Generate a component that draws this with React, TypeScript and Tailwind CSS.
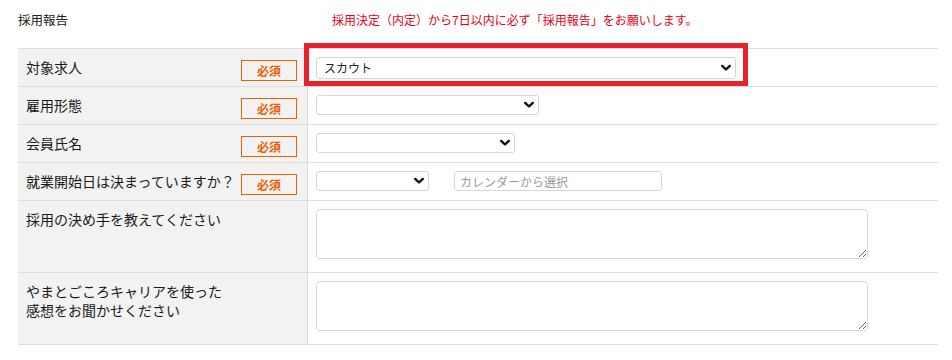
import { ReactNode } from "react";

const font = { fontFamily: '"Noto Sans CJK JP", "Noto Sans", sans-serif' };

const Chevron = () => (
    <svg width="10" height="7" viewBox="0 0 10 7" className="absolute right-[4px] top-1/2 -translate-y-1/2 pointer-events-none">
        <polyline points="1.2,1.3 5,5 8.8,1.3" fill="none" stroke="#111" strokeWidth="2.4" strokeLinecap="round" strokeLinejoin="round" />
    </svg>
);

interface SelectProps {
    width: string;
    height?: string;
    value?: string;
}

const FakeSelect = ({ width, height = "h-[20px]", value }: SelectProps) => (
    <div className={`relative ${width} ${height} border border-[#d6d6d6] rounded-[3px] bg-white`}>
        <span className="absolute left-[7px] top-1/2 -translate-y-1/2 text-[12px] leading-none text-[#222]">{value}</span>
        <Chevron />
    </div>
);

const Badge = () => (
    <span className="mt-[2px] w-[56px] h-[21px] border border-[#eb6100] text-[#eb6100] text-[12px] font-bold leading-[19px] text-center shrink-0">
        必須
    </span>
);

interface RowProps {
    label: ReactNode;
    required?: boolean;
    height: string;
    children: ReactNode;
}

const Row = ({ label, required, height, children }: RowProps) => (
    <div className={`flex border-b border-[#dddddd] ${height}`}>
        <div className="w-[290px] shrink-0 bg-[#f2f2f2] border-r border-[#dddddd] flex justify-between items-start pl-2 pr-[10px] pt-[9px]">
            <span className="text-[14px] leading-[19px] text-[#1a1a1a]">{label}</span>
            {required && <Badge />}
        </div>
        <div className="relative flex-1 pl-2 pt-2 bg-white">{children}</div>
    </div>
);

export default function App() {
    return (
        <div className="w-[952px] h-[360px] bg-white pl-[18px] pr-[14px]" style={font}>
            <div className="flex h-[48px] pt-[11px]">
                <div className="w-[314px] text-[12.5px] leading-[18px] text-[#222]">採用報告</div>
                <div className="text-[12px] leading-[18px] text-[#e60012]">
                    採用決定（内定）から7日以内に必ず「採用報告」をお願いします。
                </div>
            </div>
            <div className="border-t border-[#dddddd]">
                <Row label="対象求人" required height="h-[38px]">
                    <FakeSelect width="w-[420px]" height="h-[22px]" value="スカウト" />
                    <div className="absolute left-[-4px] top-[-6px] w-[444px] h-[43px] border-[5px] border-[#e8202a]" />
                </Row>
                <Row label="雇用形態" required height="h-[38px]">
                    <FakeSelect width="w-[223px]" />
                </Row>
                <Row label="会員氏名" required height="h-[38px]">
                    <FakeSelect width="w-[199px]" />
                </Row>
                <Row label="就業開始日は決まっていますか？" required height="h-[38px]">
                    <div className="flex gap-[25px]">
                        <FakeSelect width="w-[113px]" />
                        <input
                            placeholder="カレンダーから選択"
                            className="w-[208px] h-[20px] border border-[#d6d6d6] rounded-[3px] px-[5px] text-[12px] leading-none placeholder:text-[#9a9a9a] outline-none"
                            style={font}
                        />
                    </div>
                </Row>
                <Row label="採用の決め手を教えてください" height="h-[72px]">
                    <textarea className="block w-[552px] h-[50px] border border-[#d6d6d6] rounded-[4px] outline-none" />
                </Row>
                <Row
                    label={
                        <>
                            やまとごころキャリアを使った
                            <br />
                            感想をお聞かせください
                        </>
                    }
                    height="h-[72px]"
                >
                    <textarea className="block w-[552px] h-[50px] border border-[#d6d6d6] rounded-[4px] outline-none" />
                </Row>
            </div>
        </div>
    );
}
